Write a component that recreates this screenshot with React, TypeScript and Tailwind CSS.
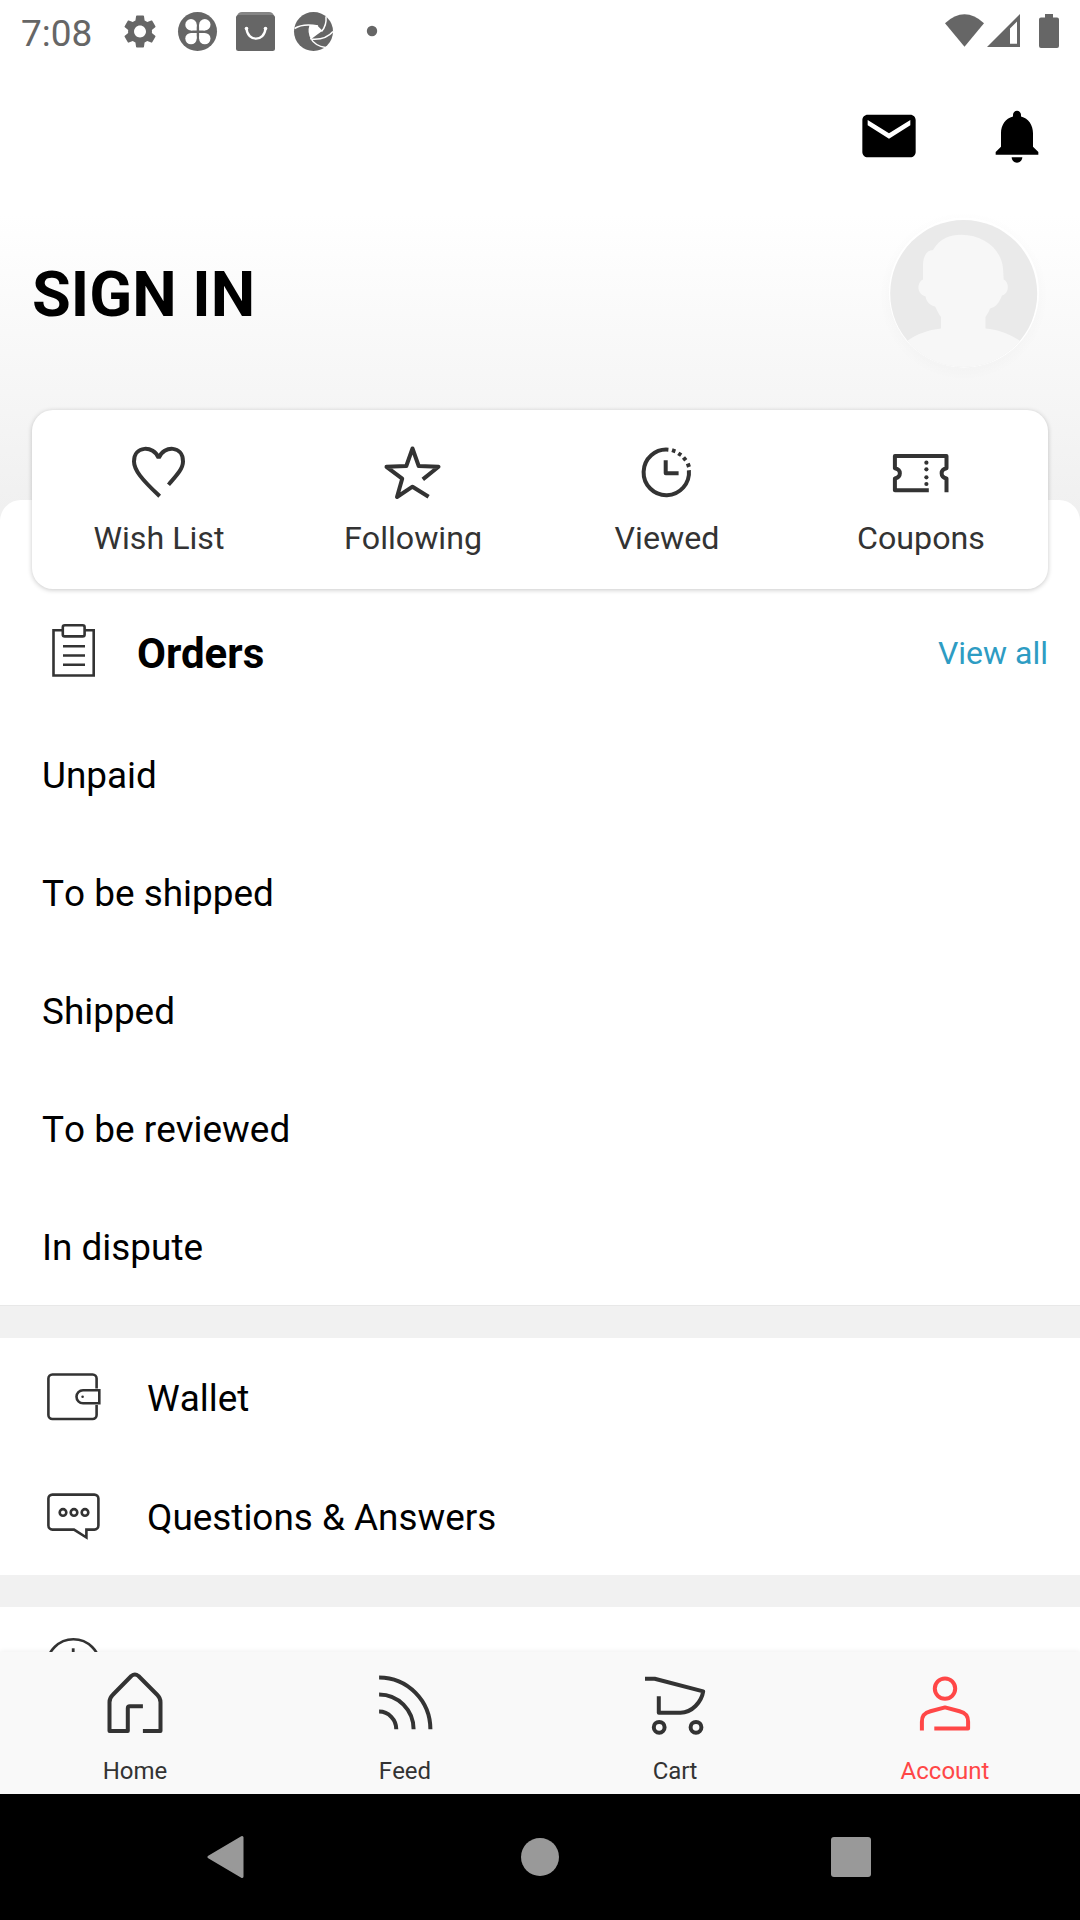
import type { ReactNode } from 'react';

type ArtProps = { box: string; className: string; children: ReactNode };

function Art({ box, className, children }: ArtProps) {
  return (
    <svg viewBox={box} className={`block shrink-0 ${className}`} fill="none" aria-hidden="true">
      {children}
    </svg>
  );
}

function StatusBar() {
  return (
    <div className="flex h-16 shrink-0 items-start justify-between text-[#666]">
      <div className="flex items-start">
        <span className="w-[120px] pl-[21px] text-[37px] leading-[67px]">7:08</span>
        <Art box="120 0 280 64" className="h-16 w-[280px]">
          <g fill="currentColor">
            <path
              transform="translate(120.1 11.6) scale(1.66)"
              d="M19.14 12.94c.04-.3.06-.61.06-.94 0-.32-.02-.64-.07-.94l2.03-1.58c.18-.14.23-.41.12-.61l-1.92-3.32c-.12-.22-.37-.29-.59-.22l-2.39.96c-.5-.38-1.03-.7-1.62-.94L14.4 2.81c-.04-.24-.24-.41-.48-.41h-3.84c-.24 0-.43.17-.47.41l-.36 2.54c-.59.24-1.13.57-1.62.94l-2.39-.96c-.22-.08-.47 0-.59.22L2.74 8.87c-.12.21-.08.47.12.61l2.03 1.58c-.05.3-.09.63-.09.94s.02.64.07.94l-2.03 1.58c-.18.14-.23.41-.12.61l1.92 3.32c.12.22.37.29.59.22l2.39-.96c.5.38 1.03.7 1.62.94l.36 2.54c.05.24.24.41.48.41h3.84c.24 0 .44-.17.47-.41l.36-2.54c.59-.24 1.13-.56 1.62-.94l2.39.96c.22.08.47 0 .59-.22l1.92-3.32c.12-.22.07-.47-.12-.61l-2.01-1.58zM12 15.6c-1.98 0-3.6-1.62-3.6-3.6s1.62-3.6 3.6-3.6 3.6 1.62 3.6 3.6-1.62 3.6-3.6 3.6z"
            />
            <circle cx="197.5" cy="31.5" r="19.5" />
            <path d="M242 12h27q4 0 5 4h-37q1-4 5-4z" opacity=".8" />
            <rect x="236" y="15" width="39" height="36" rx="2.5" />
            <circle cx="313.5" cy="31.5" r="19.5" />
            <circle cx="372" cy="31" r="5.2" />
          </g>
          <g fill="#fff">
            <circle cx="191" cy="24.800" r="5.700" />
            <circle cx="204.800" cy="24.800" r="5.700" />
            <circle cx="191" cy="38.600" r="5.700" />
            <circle cx="204.800" cy="38.600" r="5.700" />
            <path d="M191 24.800h5.700v5.700H191zM199.100 24.800h5.700v5.700h-5.700zM191 32.900h5.700v5.700H191zM199.100 32.900h5.700v5.700h-5.700z" />
            <circle cx="246.500" cy="28.500" r="1.800" />
            <circle cx="265.500" cy="28.500" r="1.800" />
            <path d="M309.500 25q5 0 8.300 1l4.700 4.800q-5 3.500-11.500 8.500q-4-7-1.500-14.300z" />
          </g>
          <g stroke="#fff" strokeWidth="1.500">
            <path d="M246.500 28.500c1 13.500 18 13.500 19 0" strokeWidth="2.400" />
            <path d="M294.500 28.500C300 25 308 24 318 26M326 16.500C326.500 22 325.500 27 321.500 31.500M333 31.500C328 37.500 321 40 310.500 39M325.500 47.500C319 46.500 313.500 43.500 310.500 38" />
          </g>
        </Art>
      </div>
      <Art box="940 0 140 64" className="h-16 w-[140px]">
        <g fill="currentColor">
          <path d="M945 23.2Q964.500 5.500 984 23.200L964.500 46.700z" />
          <path fillRule="evenodd" d="M987 47L1020 14V47zM1010 28.500V43.800H1017V21.500z" />
          <path d="M1045 14h8v3.500h4a2 2 0 0 1 2 2V46a2 2 0 0 1-2 2h-16a2 2 0 0 1-2-2V19.500a2 2 0 0 1 2-2h4z" />
        </g>
      </Art>
    </div>
  );
}

function Header() {
  return (
    <header className="h-[457px] shrink-0 bg-[linear-gradient(to_bottom,#fff_0px,#fff_150px,#f0f0f0_446px)]">
      <div className="flex justify-end gap-16 pt-[40.4px] pr-[31.400px]">
        <Art box="0 0 24 24" className="size-16">
          <path fill="#000" d="M20 4H4c-1.100 0-1.990.900-1.990 2L2 18c0 1.100.900 2 2 2h16c1.100 0 2-.900 2-2V6c0-1.100-.900-2-2-2zm0 4l-8 5-8-5V6l8 5 8-5v2z" />
        </Art>
        <Art box="0 0 24 24" className="size-16">
          <path fill="#000" d="M12 22c1.100 0 2-.900 2-2h-4c0 1.100.890 2 2 2zm6-6v-5c0-3.070-1.640-5.640-4.500-6.320V4c0-.830-.670-1.500-1.500-1.500s-1.500.670-1.500 1.500v.680C7.630 5.360 6 7.920 6 11v5l-2 2v1h16v-1l-2-2z" />
        </Art>
      </div>
      <div className="flex h-[190px] items-center justify-between pt-[63.6px] pl-8">
        <h1 className="text-[63px] leading-[74px] font-bold">SIGN IN</h1>
        <Art box="0 0 220 190" className="h-[190px] w-[220px]">
          <defs>
            <clipPath id="avatar">
              <circle cx="103.700" cy="93.500" r="73.500" />
            </clipPath>
            <radialGradient id="halo">
              <stop offset="0.850" stopColor="#000" stopOpacity=".015" />
              <stop offset="1" stopColor="#000" stopOpacity="0" />
            </radialGradient>
          </defs>
          <circle cx="103.700" cy="96" r="84" fill="url(#halo)" />
          <circle cx="104" cy="92.500" r="75" fill="#fff" />
          <g clipPath="url(#avatar)">
            <rect width="220" height="190" fill="#eaeaea" />
            <path
              fill="#f7f7f7"
              d="M73 50C80 38 90 34.700 101 34.700C124 34.700 141 49 143 68L143.700 79.500C149.500 82 149.500 93.500 142 95.500C139 103 136 107 130 108.500C129 112 127 114 125.500 117V128.500C138 130 149 133 160 141L175 190H30L47 141C57 134 68 130 81 128.500V117C78 113 77 110 75 106.500C70 105.500 66.500 102 65.500 96.500C56.500 94 56.500 82.500 63 79.500V65C63 56 67 50 73 50z"
            />
          </g>
        </Art>
      </div>
    </header>
  );
}

const shortcuts = [
  {
    label: 'Wish List',
    box: '119 440 80 64',
    art: (
      <path
        strokeLinecap="square"
        strokeLinejoin="bevel"
        d="M169.800 483.200C177 475 183 468.500 183 461.500C183 445.500 164 445 158.700 458C153.500 445 134 445.500 134 461.500C134 470 142 479.500 158.200 494.800"
      />
    ),
  },
  {
    label: 'Following',
    box: '373 440 80 64',
    art: (
      <path
        strokeLinejoin="round"
        d="M422.800 479.400L438.500 466.800L418.700 466L412.500 448.500L406.300 466L386.500 466.800L402.200 478.700L397 497L412.500 486.700L428.600 496.800"
      />
    ),
  },
  {
    label: 'Viewed',
    box: '627 440 80 64',
    art: (
      <>
        <path d="M668.400 449.700A22.700 22.800 0 1 0 688.900 470.300" />
        <path d="M665.700 460.300V473.300H678.600" strokeLinejoin="round" />
        <path d="M672 450.200L675.400 451.300M678.300 453.300L681.200 455.200M683.500 457.500L685.800 460.300M687.800 463.500L689 467" />
      </>
    ),
  },
  {
    label: 'Coupons',
    box: '881 440 80 64',
    art: (
      <>
        <path strokeLinejoin="round" d="M928.800 490.300H894.900V478.500C901.500 477 901.500 469.500 894.900 468.200V456H946.500V468.200C940 469.500 940 477 946.500 478.500V492.300" />
        <g fill="#333" stroke="none">
          <circle cx="926.400" cy="462.700" r="2.100" />
          <circle cx="926.400" cy="469.300" r="2.100" />
          <circle cx="926.400" cy="477.300" r="2.100" />
          <circle cx="926.400" cy="484" r="2.100" />
        </g>
      </>
    ),
  },
];

function ShortcutCard() {
  return (
    <div className="relative mx-8 -mt-[90px] grid h-[179px] shrink-0 grid-cols-4 rounded-[21px] bg-white shadow-[0_1px_5px_rgba(0,0,0,0.22)]">
      {shortcuts.map((s) => (
        <div key={s.label} className="flex flex-col items-center pt-[30px] text-[#333]">
          <Art box={s.box} className="h-16 w-20">
            <g stroke="#333" strokeWidth="4">
              {s.art}
            </g>
          </Art>
          <span className="mt-3 text-[32.200px] leading-[44px] [font-kerning:none]">{s.label}</span>
        </div>
      ))}
    </div>
  );
}

const orderStates = ['Unpaid', 'To be shipped', 'Shipped', 'To be reviewed', 'In dispute'];

function Orders() {
  return (
    <section className="shrink-0">
      <div className="flex h-[127px] items-center pr-8 pl-8">
        <Art box="32 611 84 84" className="size-[84px]">
          <g stroke="#333" strokeWidth="2.600">
            <path d="M62.700 630.200H53.500V675.500H93.700V630.200H84.700" />
            <rect x="62.800" y="625.200" width="21.800" height="11.200" rx="2" />
            <path d="M63 646.300H85M63 655.500H85M63 664.700H85" />
          </g>
        </Art>
        <h2 className="ml-[21px] pt-[3px] text-[42px] leading-[50px] font-bold">Orders</h2>
        <a className="ml-auto text-[32px] leading-[40px] text-[#2e9cc3]">View all</a>
      </div>
      <ul className="h-[589px]">
        {orderStates.map((label) => (
          <li key={label} className="h-[118px] pl-[42px] text-[36.900px] leading-[120px] [font-kerning:none]">
            {label}
          </li>
        ))}
      </ul>
    </section>
  );
}

function MenuRow({ label, box, children }: { label: string; box: string; children: ReactNode }) {
  return (
    <div className="flex h-[118.5px] items-center pl-8">
      <Art box={box} className="size-[84px]">
        <g stroke="#333" strokeWidth="2.600">
          {children}
        </g>
      </Art>
      <span className="ml-[31px] pt-1 text-[36.900px] leading-[44px] [font-kerning:none]">{label}</span>
    </div>
  );
}

const tabs = [
  {
    label: 'Home',
    box: '95 1660 80 80',
    art: (
      <path
        strokeLinejoin="round"
        d="M142.900 1731H160.500V1702.300Q160.500 1698 157.400 1695L138.500 1676Q134.900 1673 131.300 1676L112.600 1695Q109.500 1698 109.500 1702.300V1731H127.800V1708.300Q127.800 1706.300 129.800 1706.300H142.900"
      />
    ),
  },
  {
    label: 'Feed',
    box: '365 1660 80 80',
    art: (
      <path d="M379.100 1677.400A51.300 52 0 0 1 430.400 1729.300M379.100 1694.400A34.500 35 0 0 1 413.600 1729.300M379.100 1711.600A17.200 17.700 0 0 1 396.300 1729.300" />
    ),
  },
  {
    label: 'Cart',
    box: '635 1660 80 80',
    art: (
      <>
        <path strokeLinejoin="round" d="M645 1678.700H654.700L703.200 1691.400C701.500 1702 692 1712.700 680.500 1712.700H658.800V1696.300" />
        <circle cx="659.200" cy="1727.300" r="5.400" />
        <circle cx="696" cy="1727.300" r="5.400" />
      </>
    ),
  },
  {
    label: 'Account',
    box: '905 1660 80 80',
    active: true,
    art: (
      <>
        <circle cx="945" cy="1688.600" r="10.200" />
        <path strokeLinejoin="round" d="M921.900 1730.500V1721.700C921.900 1716 924 1713 930.500 1711.300L945 1707.400L959.500 1711.300C966 1713 968.100 1716 968.100 1721.700V1728.600H934.300" />
      </>
    ),
  },
];

function TabBar() {
  return (
    <nav className="relative grid h-[142px] shrink-0 grid-cols-4 bg-[#f9f9f9] shadow-[0_-1px_5px_rgba(0,0,0,0.06)]">
      {tabs.map((t) => (
        <div key={t.label} className={`flex flex-col items-center pt-2 ${t.active ? 'text-[#ff4747]' : 'text-[#333]'}`}>
          <Art box={t.box} className="size-20">
            <g stroke="currentColor" strokeWidth="4">
              {t.art}
            </g>
          </Art>
          <span className="mt-[15px] text-[24px] leading-[32px] [font-kerning:none]">{t.label}</span>
        </div>
      ))}
    </nav>
  );
}

function SystemNav() {
  return (
    <div className="flex h-[126px] shrink-0 items-center justify-between bg-black pr-[209.300px] pl-[207px]">
      <Art box="0 0 38 44" className="h-11 w-[38px]">
        <path d="M2 22L35 2.500V41.500z" fill="#999" stroke="#999" strokeWidth="3" strokeLinejoin="round" />
      </Art>
      <div className="ml-[3px] size-[38px] rounded-full bg-[#999]" />
      <div className="h-10 w-[39.5px] rounded-[3px] bg-[#999]" />
    </div>
  );
}

export default function App() {
  return (
    <div className="flex h-[1920px] w-[1080px] flex-col overflow-hidden bg-white font-['Roboto',sans-serif] text-black">
      <div className="flex h-[1652px] shrink-0 flex-col overflow-hidden">
        <StatusBar />
        <Header />
        <main className="-mt-[21px] flex shrink-0 flex-col rounded-t-[21px] bg-white">
          <ShortcutCard />
          <Orders />
          <div className="h-[33px] shrink-0 border-t border-[#e8e8e8] bg-[#f1f1f1]" />
          <section className="shrink-0">
            <MenuRow label="Wallet" box="32 1355 84 84">
              <path d="M96.600 1388.500V1378.500A4 4 0 0 0 92.600 1374.500H52.400A4 4 0 0 0 48.400 1378.500V1415A4 4 0 0 0 52.400 1419H92.600A4 4 0 0 0 96.600 1415V1405" />
              <path d="M99.300 1390.200H83A6.500 6.500 0 0 0 83 1403.200H99.300z" />
              <circle cx="82.600" cy="1396.700" r="1.300" fill="#333" stroke="none" />
            </MenuRow>
            <MenuRow label="Questions & Answers" box="32 1474 84 84">
              <path d="M74 1529.600H52.400A4 4 0 0 1 48.400 1525.600V1498.600A4 4 0 0 1 52.400 1494.600H94.400A4 4 0 0 1 98.400 1498.600V1525.600A4 4 0 0 1 94.400 1529.600H86.400V1537.500z" />
              <circle cx="63" cy="1512.400" r="3.300" />
              <circle cx="74" cy="1512.400" r="3.300" />
              <circle cx="85" cy="1512.400" r="3.300" />
            </MenuRow>
          </section>
          <div className="h-[32px] shrink-0 bg-[#f1f1f1]" />
          <section className="shrink-0 pt-[18px] pl-8">
            <Art box="32 1625 84 84" className="size-[84px]">
              <circle cx="73.400" cy="1665.700" r="26.500" stroke="#333" strokeWidth="2.600" />
              <path d="M73.200 1648.300V1667" stroke="#333" strokeWidth="2.800" />
            </Art>
          </section>
        </main>
      </div>
      <TabBar />
      <SystemNav />
    </div>
  );
}
